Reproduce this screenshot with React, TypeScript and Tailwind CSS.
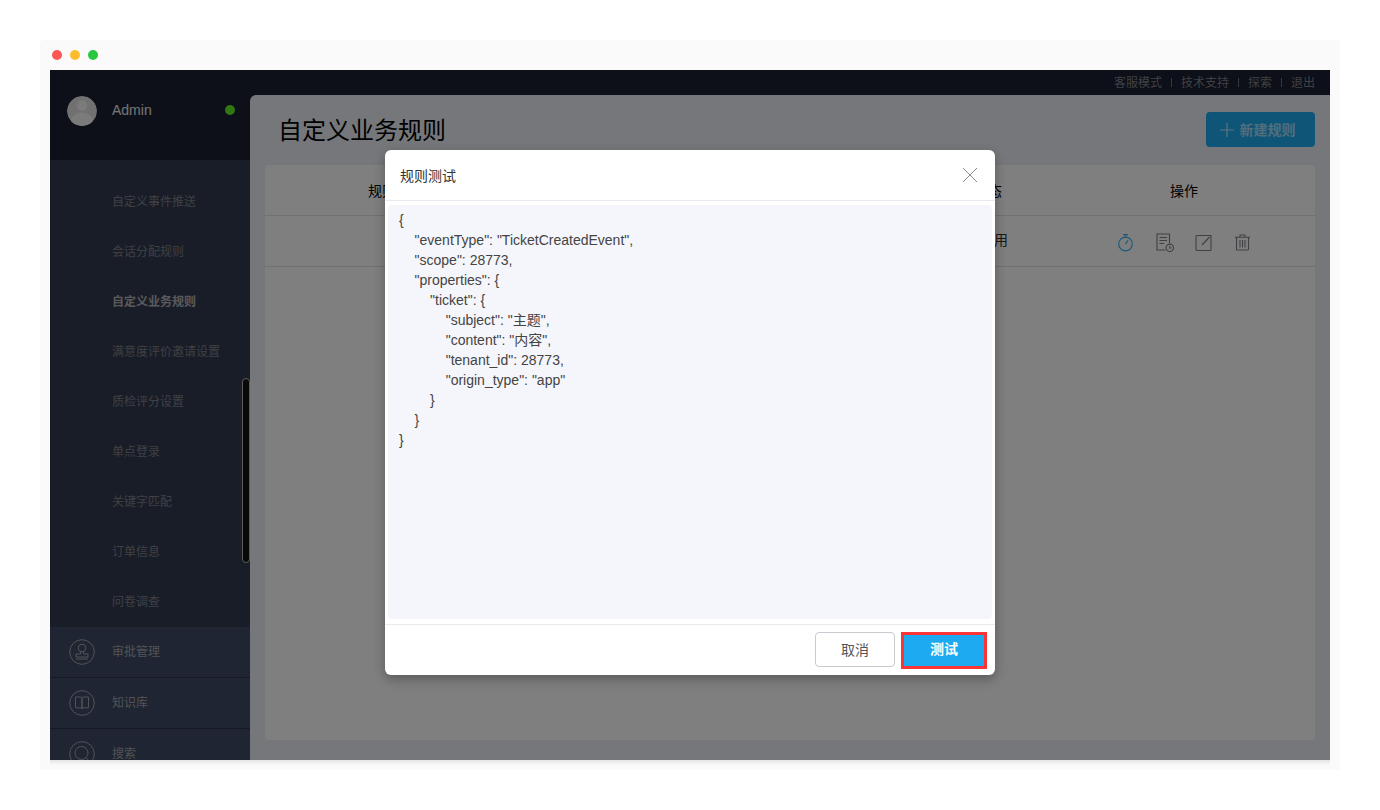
import React from "react";

const font = { fontFamily: '"Liberation Sans", "Noto Sans CJK SC", sans-serif' };

const subItems = ["自定义事件推送", "会话分配规则", "自定义业务规则", "满意度评价邀请设置", "质检评分设置", "单点登录", "关键字匹配", "订单信息", "问卷调查"];

const code = `{
    "eventType": "TicketCreatedEvent",
    "scope": 28773,
    "properties": {
        "ticket": {
            "subject": "主题",
            "content": "内容",
            "tenant_id": 28773,
            "origin_type": "app"
        }
    }
}`;

const StampIcon = () => (
  <svg width="26" height="26" viewBox="0 0 26 26" fill="none" stroke="#a4a6ad" strokeWidth="1">
    <circle cx="13" cy="13" r="12.3" />
    <circle cx="13" cy="9" r="3.8" />
    <path d="M11.6 12.6v2.4H7v3h12v-3h-4.6v-2.4" />
    <path d="M7 20h12" />
  </svg>
);

const BookIcon = () => (
  <svg width="26" height="26" viewBox="0 0 26 26" fill="none" stroke="#a4a6ad" strokeWidth="1">
    <circle cx="13" cy="13" r="12.3" />
    <path d="M6.5 7h5c1 0 1.5.6 1.5 1.5V19c0-.7-.6-1.2-1.5-1.2h-5zM19.5 7h-5c-1 0-1.5.6-1.5 1.5V19c0-.7.6-1.2 1.5-1.2h5z" />
  </svg>
);

const SearchIcon = () => (
  <svg width="26" height="26" viewBox="0 0 26 26" fill="none" stroke="#a4a6ad" strokeWidth="1">
    <circle cx="13" cy="13" r="12.3" />
    <circle cx="12.5" cy="12" r="6.5" />
    <path d="M17 16.8l4 4" />
  </svg>
);

const NavRow = ({ icon, label }: { icon: React.ReactNode; label: string }) => (
  <div className="flex h-[51px] shrink-0 items-center border-b border-[#2e3444] bg-[#3e4a64]">
    <div className="ml-[19px] flex w-[26px] justify-center">{icon}</div>
    <span className="ml-[17px] text-xs text-[#a4a6ad]">{label}</span>
  </div>
);

export default function App() {
  return (
    <div className="h-[810px] w-[1380px] overflow-hidden bg-white pt-10 pl-10" style={font}>
      <div className="h-[730px] w-[1300px] rounded-t-[4px] bg-[#fafafa] px-2.5">
        <div className="flex h-[30px] items-center gap-2">
          <span className="ml-[2px] h-2.5 w-2.5 rounded-full bg-[#fc5753]" />
          <span className="h-2.5 w-2.5 rounded-full bg-[#fdbc2e]" />
          <span className="h-2.5 w-2.5 rounded-full bg-[#26c83f]" />
        </div>

        <div className="relative h-[690px] w-[1280px] overflow-hidden bg-[#1a2030]">
          <div className="flex h-full">
            {/* sidebar */}
            <aside className="relative flex w-[200px] shrink-0 flex-col overflow-hidden bg-[#323a50]">
              <div className="flex h-[90px] shrink-0 items-start bg-[#1a2030] pt-[26px] pl-[17px]">
                <svg width="30" height="30" viewBox="0 0 30 30">
                  <defs>
                    <clipPath id="avatar-clip">
                      <circle cx="15" cy="15" r="15" />
                    </clipPath>
                  </defs>
                  <g clipPath="url(#avatar-clip)">
                    <circle cx="15" cy="15" r="15" fill="#e2e2e2" />
                    <circle cx="15" cy="9.5" r="5.2" fill="#f6f6f6" />
                    <ellipse cx="15" cy="25" rx="11" ry="8.5" fill="#f6f6f6" />
                  </g>
                </svg>
                <span className="ml-[15px] text-sm leading-7 text-white/90">Admin</span>
                <span className="mt-[9px] ml-[73px] h-2.5 w-2.5 rounded-full bg-[#60f024]" />
              </div>
              <div className="flex h-[467px] shrink-0 flex-col pt-[17px]">
                {subItems.map((item) => (
                  <div
                    key={item}
                    className={`flex h-[50px] shrink-0 items-center pl-[62px] text-xs ${
                      item === "自定义业务规则" ? "font-bold text-[#b4b5ba]" : "text-[#7f8188]"
                    }`}
                  >
                    {item}
                  </div>
                ))}
              </div>
              <NavRow icon={<StampIcon />} label="审批管理" />
              <NavRow icon={<BookIcon />} label="知识库" />
              <NavRow icon={<SearchIcon />} label="搜索" />
              <div className="absolute top-[308px] right-0 h-[185px] w-2 rounded border border-[#bbbbbb] bg-[#111111]" />
            </aside>

            {/* main */}
            <div className="flex min-w-0 flex-1 flex-col">
              <div className="flex h-[25px] shrink-0 items-center justify-end pr-[15px] text-xs text-[#80828a]">
                <span>客服模式</span>
                <span className="mx-[9px] h-[9px] w-px bg-[#70737a]" />
                <span>技术支持</span>
                <span className="mx-[9px] h-[9px] w-px bg-[#70737a]" />
                <span>探索</span>
                <span className="mx-[9px] h-[9px] w-px bg-[#70737a]" />
                <span>退出</span>
              </div>
              <div className="flex min-h-0 flex-1 flex-col rounded-tl-md bg-[#eceef4] px-[15px] pb-5">
                <div className="flex h-[70px] shrink-0 items-center justify-between">
                  <h1 className="pt-[2px] pl-[13px] text-2xl font-normal text-black">自定义业务规则</h1>
                  <button className="mt-[-1px] flex h-[35px] w-[109px] items-center justify-center gap-[5px] rounded bg-[#1eaaf1] pr-[7px] text-sm font-bold text-white/60">
                    <svg width="16" height="16" viewBox="0 0 16 16" stroke="#ffffff" strokeOpacity="0.7" strokeWidth="1.2">
                      <path d="M8 1v14M1 8h14" />
                    </svg>
                    新建规则
                  </button>
                </div>
                <div className="flex-1 rounded bg-white">
                  <div className="grid h-[51px] grid-cols-[262px_396px_130px_262px] items-center border-b border-[#e0e2e8] pt-[2px] text-sm text-black">
                    <span className="text-center">规则名称</span>
                    <span />
                    <span className="text-center">状态</span>
                    <span className="text-center">操作</span>
                  </div>
                  <div className="grid h-[51px] grid-cols-[262px_396px_130px_262px] items-center border-b border-[#e0e2e8] text-sm text-[#333333]">
                    <span />
                    <span />
                    <span className="pb-[2px] pl-[57px]">启用</span>
                    <div className="flex items-center justify-center gap-5 pt-[2px] pr-[1px]">
                      <svg width="19" height="19" viewBox="0 0 19 19" fill="none" stroke="#3db3ee" strokeWidth="1.2">
                        <circle cx="9.5" cy="11" r="6.8" />
                        <path d="M7 1.6h5M9.5 1.6v2.6M9.5 11l2.6-3.6" />
                      </svg>
                      <svg width="19" height="19" viewBox="0 0 19 19" fill="none" stroke="#7f8187" strokeWidth="1.1">
                        <path d="M10.5 17H2V1h12.5v9" />
                        <path d="M4.5 4.5h7.5M4.5 7.5h7.5M4.5 10.5h4.5" />
                        <circle cx="14.8" cy="14.8" r="3.7" />
                        <path d="M14.8 12.8v2.2h1.8" />
                      </svg>
                      <svg width="19" height="19" viewBox="0 0 19 19" fill="none" stroke="#7f8187" strokeWidth="1.1">
                        <path d="M17 2.5H3a1 1 0 0 0-1 1v13a1 1 0 0 0 1 1h13a1 1 0 0 0 1-1V2.5z" />
                        <path d="M8 12l7.5-8" />
                      </svg>
                      <svg width="19" height="19" viewBox="0 0 19 19" fill="none" stroke="#7f8187" strokeWidth="1.1">
                        <path d="M2 4.2h15M7 4V2h5v2M3.5 4.2V16a1 1 0 0 0 1 1h10a1 1 0 0 0 1-1V4.2" />
                        <path d="M7 7v7.5M9.5 7v7.5M12 7v7.5" />
                      </svg>
                    </div>
                  </div>
                </div>
              </div>
            </div>
          </div>

          {/* dialog */}
          <div className="absolute inset-0 flex items-start justify-center bg-black/50 pt-20">
            <div className="flex h-[525px] w-[610px] flex-col rounded-md bg-white shadow-[0_4px_12px_rgba(0,0,0,0.3)]">
              <div className="flex h-[51px] shrink-0 items-center justify-between border-b border-[#e8eaee] pr-4 pl-[15px]">
                <span className="pt-[1px] text-sm text-[#333333]">规则测试</span>
                <svg width="18" height="18" viewBox="0 0 18 18" stroke="#8b8b8b" strokeWidth="1">
                  <path d="M2 2l14 14M16 2L2 16" />
                </svg>
              </div>
              <pre
                className="mx-[3px] mt-1 h-[414px] shrink-0 rounded bg-[#f4f6fb] pt-[5px] pl-[11px] text-[14px] leading-5 text-[#444444]"
                style={font}
              >
                {code}
              </pre>
              <div className="mt-[5px] flex flex-1 items-start justify-end gap-[6px] border-t border-[#e8eaee] pt-[7px] pr-2">
                <button className="h-[35px] w-20 rounded border border-[#c8cad0] bg-white text-sm text-[#555555]">取消</button>
                <button className="h-[37px] w-[86px] border-[3px] border-[#fb3535] bg-[#1eaaf1] pb-1 text-sm font-bold text-white">测试</button>
              </div>
            </div>
          </div>
        </div>
        <div className="h-[5px] bg-gradient-to-b from-[#e4e4e4] to-[#fafafa]" />
      </div>
    </div>
  );
}
